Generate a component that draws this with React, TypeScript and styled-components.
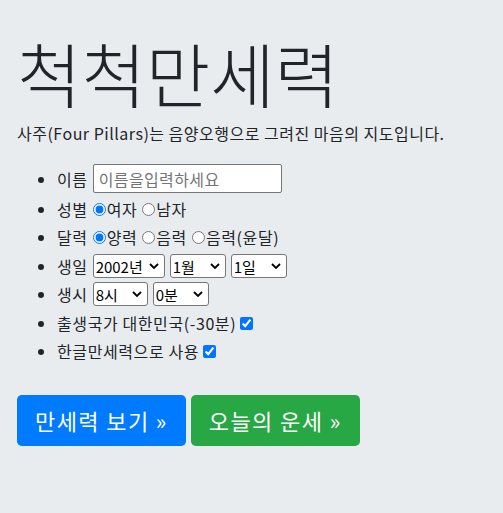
import React from 'react';
import styled, { createGlobalStyle } from 'styled-components';

const GlobalStyle = createGlobalStyle`
  html, body {
    margin: 0;
    padding: 0;
    background: #e9ecef;
  }
  body {
    font-family: "Noto Sans CJK KR", "Noto Sans", sans-serif;
    color: #212529;
    font-size: 16px;
  }
`;

const Jumbotron = styled.div`
  background: #e9ecef;
  padding: 31px 17px 40px;
  min-height: 513px;
  box-sizing: border-box;
`;

const Title = styled.h1`
  margin: 0;
  font-size: 70px;
  font-weight: 300;
  line-height: 84px;
`;

const Lead = styled.p`
  margin: 6px 0 19px;
  font-size: 16px;
  line-height: 24px;
  letter-spacing: 0.5px;
`;

const List = styled.ul`
  margin: 0 0 30px;
  padding-left: 40px;
  font-size: 16px;
  letter-spacing: 0.6px;
`;

const Item = styled.li<{ $h?: number }>`
  line-height: 24px;
  min-height: ${p => p.$h ?? 28}px;
`;

const Row = styled.span`
  display: inline-flex;
  align-items: center;
  min-height: 28px;
`;

const Label = styled.span`
  margin-right: 5px;
`;

const TextInput = styled.input`
  box-sizing: border-box;
  width: 189px;
  height: 29px;
  padding: 1px 5px;
  border: 1px solid #767676;
  border-radius: 2px;
  font: inherit;
  font-size: 16px;
  letter-spacing: 0.4px;
  background: #fff;
  &::placeholder {
    color: #757575;
  }
`;

const Select = styled.select<{ $w: number }>`
  box-sizing: border-box;
  width: ${p => p.$w}px;
  height: 24px;
  padding: 0 14px 0 2px;
  margin-right: 5px;
  border: 1px solid #767676;
  border-radius: 3px;
  font: inherit;
  font-size: 15px;
  letter-spacing: 0;
  color: #000;
  appearance: none;
  background: #fff url("data:image/svg+xml;utf8,<svg xmlns='http://www.w3.org/2000/svg' width='10' height='6' viewBox='0 0 10 6'><path d='M1 1l4 4 4-4' fill='none' stroke='black' stroke-width='1.8'/></svg>") no-repeat right 5px center;
`;

const Radio = styled.input<{ $gap?: boolean }>`
  margin: 0 1px 0 ${p => (p.$gap ? 5 : 0)}px;
  width: 13px;
  height: 13px;
`;

const Check = styled.input`
  margin: 0 0 0 4px;
  width: 13px;
  height: 13px;
`;

const Buttons = styled.div`
  display: flex;
  gap: 5px;
`;

const Button = styled.a<{ $variant: 'primary' | 'success' }>`
  display: inline-block;
  padding: 0 18px;
  height: 51px;
  line-height: 51px;
  font-size: 22px;
  letter-spacing: 1.4px;
  color: #fff;
  text-decoration: none;
  border-radius: 4.8px;
  background: ${p => (p.$variant === 'primary' ? '#007bff' : '#28a745')};
  box-sizing: border-box;
`;

const App: React.FC = () => {
  return (
    <Jumbotron>
      <GlobalStyle />
      <Title>척척만세력</Title>
      <Lead>사주(Four Pillars)는 음양오행으로 그려진 마음의 지도입니다.</Lead>
      <List>
        <Item $h={31}>
          <Row>
            <Label>이름</Label>
            <TextInput placeholder="이름을입력하세요" />
          </Row>
        </Item>
        <Item $h={27}>
          <Row>
            <Label>성별</Label>
            <Radio type="radio" name="sex" defaultChecked />여자
            <Radio type="radio" name="sex" $gap />남자
          </Row>
        </Item>
        <Item $h={29}>
          <Row>
            <Label>달력</Label>
            <Radio type="radio" name="cal" defaultChecked />양력
            <Radio type="radio" name="cal" $gap />음력
            <Radio type="radio" name="cal" $gap />음력(윤달)
          </Row>
        </Item>
        <Item>
          <Row>
            <Label>생일</Label>
            <Select $w={72} defaultValue="2002">
              <option value="2002">2002년</option>
            </Select>
            <Select $w={56} defaultValue="1">
              <option value="1">1월</option>
            </Select>
            <Select $w={56} defaultValue="1">
              <option value="1">1일</option>
            </Select>
          </Row>
        </Item>
        <Item $h={29}>
          <Row>
            <Label>생시</Label>
            <Select $w={55} defaultValue="8">
              <option value="8">8시</option>
            </Select>
            <Select $w={56} defaultValue="0">
              <option value="0">0분</option>
            </Select>
          </Row>
        </Item>
        <Item>
          <Row>
            출생국가 대한민국(-30분)
            <Check type="checkbox" defaultChecked />
          </Row>
        </Item>
        <Item>
          <Row>
            한글만세력으로 사용
            <Check type="checkbox" defaultChecked />
          </Row>
        </Item>
      </List>
      <Buttons>
        <Button $variant="primary" href="#">만세력 보기 »</Button>
        <Button $variant="success" href="#">오늘의 운세 »</Button>
      </Buttons>
    </Jumbotron>
  );
};

export default App;
